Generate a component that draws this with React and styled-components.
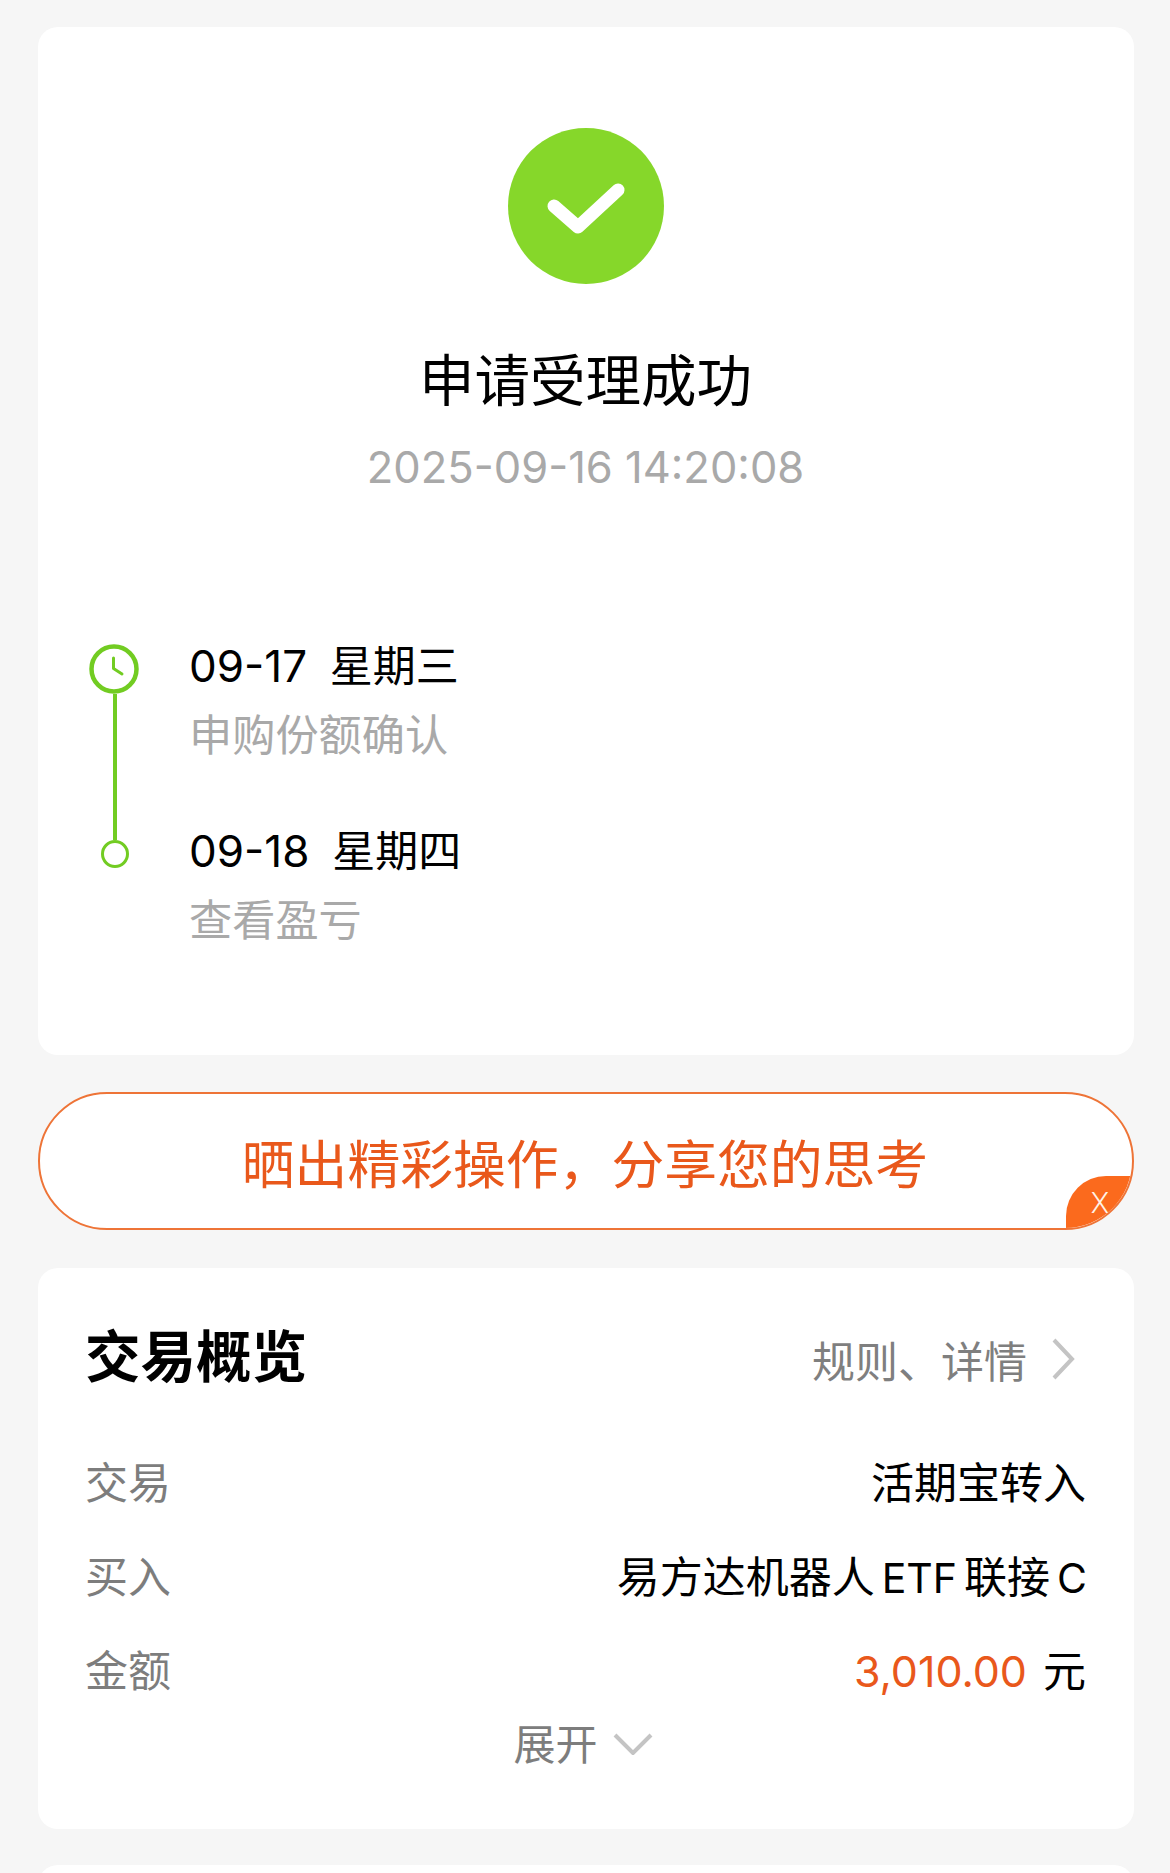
import React from "react";
import styled, { createGlobalStyle } from "styled-components";

const Global = createGlobalStyle`
  html, body { margin: 0; padding: 0; background: #f6f6f6; }
  body { font-family: Inter, "Noto Sans CJK SC", sans-serif; overflow: hidden; }
  #root { height: 1873px; overflow: hidden; }
`;

const Page = styled.main`
  display: flex;
  flex-direction: column;
  padding: 27px 36px 0 38px;
  background: #f6f6f6;
`;

const Card = styled.section`
  background: #fff;
  border-radius: 20px;
  box-sizing: border-box;
`;

const ResultCard = styled(Card)`
  height: 1028px;
  padding: 101px 50px 0 49px;
  display: flex;
  flex-direction: column;
`;

const Result = styled.div`
  display: flex;
  flex-direction: column;
  align-items: center;
  align-self: center;
  width: 100%;
`;

const Title = styled.h1`
  margin: 53px 0 0;
  font-size: 55.5px;
  line-height: 80px;
  font-weight: 400;
  color: #000;
  font-family: "Noto Sans CJK SC", sans-serif;
`;

const Time = styled.div`
  margin-top: 20px;
  font-size: 43.5px;
  line-height: 60px;
  color: #a9a9a9;
`;

const Timeline = styled.div`
  display: flex;
  margin-top: 139px;
  gap: 46px;
`;

const Rail = styled.div`
  width: 56px;
  padding-top: 8px;
  display: flex;
  flex-direction: column;
  align-items: center;
`;

const ClockIcon = styled.svg`
  margin-right: 2px;
`;

const RailLine = styled.div`
  width: 4.5px;
  height: 146px;
  background: #72cc22;
`;

const RailDot = styled.div`
  width: 28px;
  height: 28px;
  box-sizing: border-box;
  border: 3.5px solid #72cc22;
  border-radius: 50%;
`;

const Steps = styled.div`
  display: flex;
  flex-direction: column;
  gap: 59px;
`;

const Step = styled.div`
  display: flex;
  flex-direction: column;
  gap: 6px;
`;

const StepDate = styled.div`
  font-size: 44px;
  line-height: 60px;
  height: 60px;
  color: #000;
  white-space: pre;
  font-family: Inter, "Noto Sans CJK SC", sans-serif;
`;

const Weekday = styled.span`
  font-size: 43px;
  line-height: 1;
  margin-left: -2px;
  font-family: "Noto Sans CJK SC", sans-serif;
`;

const StepNote = styled.div`
  font-size: 43.2px;
  line-height: 60px;
  color: #a9a9a9;
  font-family: "Noto Sans CJK SC", sans-serif;
`;

const Banner = styled.div`
  position: relative;
  height: 138px;
  margin: 37px 0 38px;
  box-sizing: border-box;
  border: 2px solid #ee7437;
  border-radius: 69px;
  background: #fff;
  overflow: hidden;
  display: flex;
  align-items: center;
  justify-content: center;
`;

const BannerText = styled.span`
  font-size: 52.8px;
  line-height: 70px;
  margin: -1px 2px 0 0;
  color: #e9581b;
  font-family: "Noto Sans CJK SC", sans-serif;
`;

const CloseTag = styled.span`
  position: absolute;
  right: -2px;
  bottom: -2px;
  width: 68px;
  height: 54px;
  background: #fb6a1d;
  border-top-left-radius: 40px;
  color: #fff3e8;
  font-size: 30px;
  font-weight: 300;
  line-height: 54px;
  text-align: center;
  font-family: Roboto, sans-serif;
`;

const SummaryCard = styled(Card)`
  height: 561px;
  margin-bottom: 36px;
  padding: 56px 48px 0 47px;
  display: flex;
  flex-direction: column;
`;

const SummaryHead = styled.header`
  display: flex;
  align-items: center;
  justify-content: space-between;
  height: 70px;
  margin-bottom: 56px;
`;

const SummaryTitle = styled.h2`
  margin: 0 0 12px;
  font-size: 55.5px;
  font-weight: 700;
  color: #000;
  font-family: "Noto Sans CJK SC", sans-serif;
`;

const RulesLink = styled.div`
  display: flex;
  align-items: center;
  gap: 24px;
  padding-right: 11px;
  font-size: 43px;
  color: #7f7f7f;
  font-family: "Noto Sans CJK SC", sans-serif;
`;

const Rows = styled.div`
  display: flex;
  flex-direction: column;
  gap: 34px;
`;

const Row = styled.div`
  display: flex;
  justify-content: space-between;
  align-items: center;
  height: 60px;
  font-size: 43px;
  font-family: "Noto Sans CJK SC", sans-serif;
`;

const RowLabel = styled.span`
  color: #7d7d7d;
`;

const RowValue = styled.span`
  color: #000;
  white-space: pre;
`;

const Latin = styled.span`
  font-family: Inter, sans-serif;
  font-size: 41px;
  margin: 0 7px;
`;

const LatinEnd = styled(Latin)`
  margin-right: -1px;
`;

const Amount = styled.span`
  color: #e9581b;
  font-family: Inter, sans-serif;
  margin-right: 16px;
`;

const Expand = styled.div`
  display: flex;
  justify-content: center;
  align-items: center;
  gap: 15px;
  height: 60px;
  margin-top: 13px;
  padding-right: 5px;
  font-size: 42px;
  color: #7d7d7d;
  font-family: "Noto Sans CJK SC", sans-serif;
`;

const ExpandIcon = styled.svg`
  margin-top: 6px;
`;

const Stub = styled(Card)`
  height: 60px;
`;

const Check = () => (
  <svg width="156" height="156" viewBox="0 0 156 156">
    <circle cx="78" cy="78" r="78" fill="#86d72a" />
    <path d="M46 78 L70 99 L110 62" fill="none" stroke="#fff" strokeWidth="13" strokeLinecap="round" strokeLinejoin="round" />
  </svg>
);

const Clock = () => (
  <ClockIcon width="50" height="50" viewBox="0 0 50 50">
    <circle cx="25" cy="25" r="22.5" fill="none" stroke="#72cc22" strokeWidth="4.5" />
    <path d="M24.5 14 V24.5 L33 30" fill="none" stroke="#72cc22" strokeWidth="3" strokeLinecap="round" strokeLinejoin="round" />
  </ClockIcon>
);

const ChevronRight = () => (
  <svg width="24" height="42" viewBox="0 0 24 42">
    <path d="M3 2 L21 21 L3 40" fill="none" stroke="#c4c4c4" strokeWidth="4" />
  </svg>
);

const ChevronDown = () => (
  <ExpandIcon width="40" height="22" viewBox="0 0 40 22">
    <path d="M2 2 L20 20 L38 2" fill="none" stroke="#c4c4c4" strokeWidth="4" />
  </ExpandIcon>
);

export default function App() {
  return (
    <>
      <Global />
      <Page>
        <ResultCard>
          <Result>
            <Check />
            <Title>申请受理成功</Title>
            <Time>2025-09-16 14:20:08</Time>
          </Result>
          <Timeline>
            <Rail>
              <Clock />
              <RailLine />
              <RailDot />
            </Rail>
            <Steps>
              <Step>
                <StepDate>09-17  <Weekday>星期三</Weekday></StepDate>
                <StepNote>申购份额确认</StepNote>
              </Step>
              <Step>
                <StepDate>09-18  <Weekday>星期四</Weekday></StepDate>
                <StepNote>查看盈亏</StepNote>
              </Step>
            </Steps>
          </Timeline>
        </ResultCard>
        <Banner>
          <BannerText>晒出精彩操作，分享您的思考</BannerText>
          <CloseTag>X</CloseTag>
        </Banner>
        <SummaryCard>
          <SummaryHead>
            <SummaryTitle>交易概览</SummaryTitle>
            <RulesLink>
              规则、详情
              <ChevronRight />
            </RulesLink>
          </SummaryHead>
          <Rows>
            <Row>
              <RowLabel>交易</RowLabel>
              <RowValue>活期宝转入</RowValue>
            </Row>
            <Row>
              <RowLabel>买入</RowLabel>
              <RowValue>易方达机器人<Latin>ETF</Latin>联接<LatinEnd>C</LatinEnd></RowValue>
            </Row>
            <Row>
              <RowLabel>金额</RowLabel>
              <RowValue><Amount>3,010.00</Amount>元</RowValue>
            </Row>
          </Rows>
          <Expand>
            展开
            <ChevronDown />
          </Expand>
        </SummaryCard>
        <Stub />
      </Page>
    </>
  );
}
